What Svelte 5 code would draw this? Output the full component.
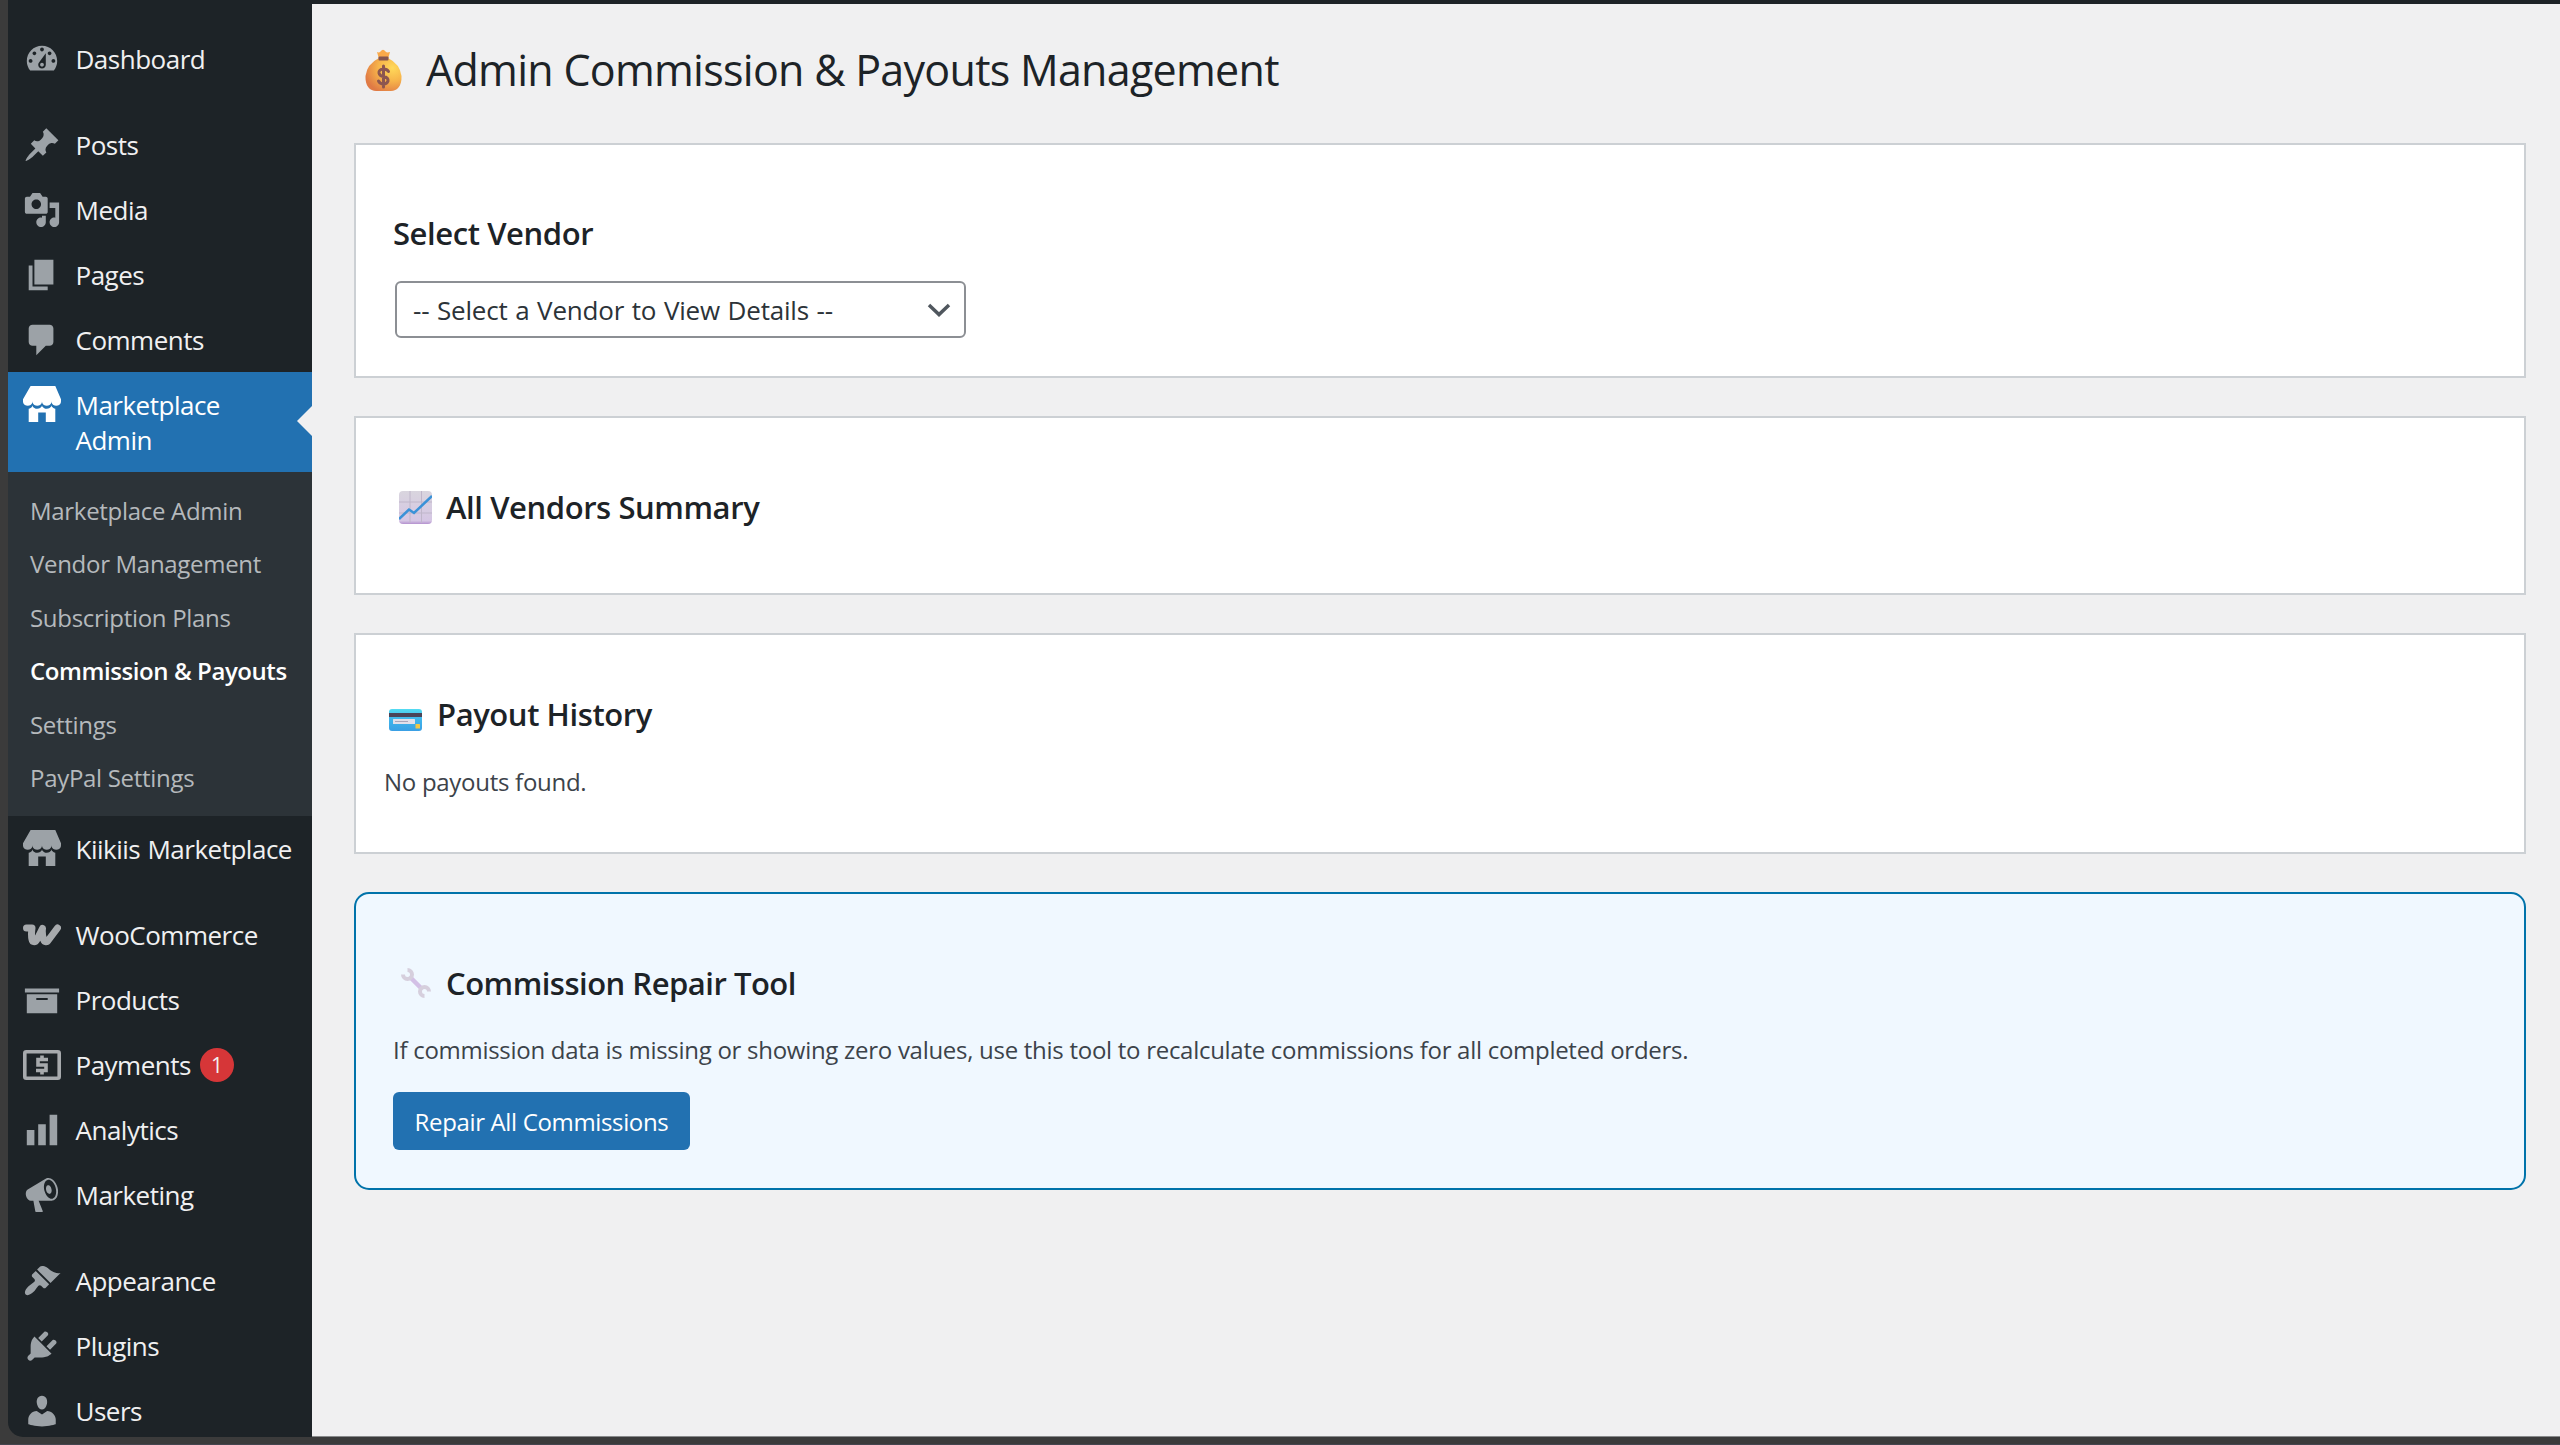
<script>
  // dashicons, 20x20
  const icons = {
    dashboard:
      "M3.76 16h12.48c1.1-1.37 1.76-3.11 1.76-5 0-4.42-3.58-8-8-8s-8 3.58-8 8c0 1.89.66 3.63 1.76 5zM10 4c.55 0 1 .45 1 1s-.45 1-1 1-1-.45-1-1 .45-1 1-1zM6 6c.55 0 1 .45 1 1s-.45 1-1 1-1-.45-1-1 .45-1 1-1zm8 0c.55 0 1 .45 1 1s-.45 1-1 1-1-.45-1-1 .45-1 1-1zm-5.37 5.55L12 7v6c0 1.1-.9 2-2 2s-2-.9-2-2c0-.57.24-1.08.63-1.45zM4 10c.55 0 1 .45 1 1s-.45 1-1 1-1-.45-1-1 .45-1 1-1zm12 0c.55 0 1 .45 1 1s-.45 1-1 1-1-.45-1-1 .45-1 1-1zm-5 3c0-.55-.45-1-1-1s-1 .45-1 1 .45 1 1 1 1-.45 1-1z",
    post:
      "M10.44 3.02l1.82-1.82 6.36 6.35-1.83 1.82c-1.05-.68-2.48-.57-3.41.36l-.75.75c-.92.93-1.04 2.35-.35 3.41l-1.83 1.82-2.41-2.41-2.8 2.79c-.42.42-3.38 2.71-3.8 2.29s1.86-3.39 2.28-3.81l2.79-2.79L4.1 9.36l1.83-1.82c1.05.69 2.48.57 3.4-.36l.75-.75c.93-.92 1.05-2.35.36-3.41z",
    media:
      "M13 11V4c0-.55-.45-1-1-1h-1.67L9 1H5L3.67 3H2c-.55 0-1 .45-1 1v7c0 .55.45 1 1 1h10c.55 0 1-.45 1-1zM7 4.5c1.38 0 2.5 1.12 2.5 2.5S8.38 9.5 7 9.5 4.5 8.38 4.5 7 5.62 4.5 7 4.5zM14 6h5v10.5c0 1.38-1.12 2.5-2.5 2.5S14 17.88 14 16.5s1.12-2.5 2.5-2.5c.17 0 .34.02.5.05V9h-3V6zm-4 8.05V13h2v3.5c0 1.38-1.12 2.5-2.5 2.5S7 17.88 7 16.5 8.12 14 9.5 14c.17 0 .34.02.5.05z",
    page: "M6 15V2h10v13H6zm-1 1h8v2H3V5h2v11z",
    comments:
      "M5 2h9c1.1 0 2 .9 2 2v7c0 1.1-.9 2-2 2h-2l-5 5v-5H5c-1.1 0-2-.9-2-2V4c0-1.1.9-2 2-2z",
    store:
      "M1 10c.41.29.96.43 1.5.43.55 0 1.09-.14 1.5-.43.62-.46 1-1.17 1-2 0 .83.37 1.54 1 2 .41.29.96.43 1.5.43.55 0 1.09-.14 1.5-.43.62-.46 1-1.17 1-2 0 .83.37 1.54 1 2 .41.29.96.43 1.51.43.54 0 1.08-.14 1.49-.43.62-.46 1-1.17 1-2 0 .83.37 1.54 1 2 .41.29.96.43 1.5.43.55 0 1.09-.14 1.5-.43.63-.46 1-1.17 1-2V7l-3-7H4L0 7v1c0 .83.37 1.54 1 2zm2 8.99h5v-5h4v5h5v-7c-.37-.05-.72-.22-1-.43-.63-.45-1-.73-1-1.56 0 .83-.38 1.11-1 1.56-.41.3-.95.43-1.49.44-.55 0-1.1-.14-1.51-.44-.63-.45-1-.73-1-1.56 0 .83-.38 1.11-1 1.56-.41.3-.95.43-1.5.44-.54 0-1.09-.14-1.5-.44-.63-.45-1-.73-1-1.57 0 .84-.38 1.12-1 1.57-.29.21-.63.38-1 .44v6.99z",
    archive: "M19 4v2H1V4h18zM2 7h16v10H2V7zm11 3V9H7v1h6z",
    chart: "M18 18V2h-4v16h4zm-6 0V7H8v11h4zm-6 0v-8H2v8h4z",
    megaphone:
      "M18.15 5.94c.46 1.62.38 3.22-.02 4.48-.42 1.28-1.26 2.18-2.3 2.48-.16.06-.26.06-.4.06-.06.02-.12.02-.18.02-.06.02-.14.02-.22.02h-6.8l2.22 5.5c.02.14-.06.26-.14.34-.08.1-.24.16-.34.16H6.95c-.1 0-.26-.06-.34-.16-.08-.08-.16-.2-.14-.34l-1-5.5H4.25l-.02-.02c-.5.06-1.08-.18-1.54-.62s-.88-1.08-1.06-1.88c-.24-.8-.2-1.56-.02-2.2.18-.62.58-1.08 1.06-1.3l.02-.02 9-5.4c.1-.06.18-.1.24-.16.06-.04.14-.08.24-.12.16-.08.28-.12.5-.18 1.04-.3 2.24.1 3.22.98s1.84 2.24 2.26 3.86zm-2.58 5.98h-.02c.4-.1.74-.34 1.04-.7.58-.7.86-1.76.86-3.04 0-.64-.1-1.3-.28-1.98-.34-1.36-1.02-2.5-1.78-3.24s-1.68-1.1-2.46-.88c-.82.22-1.4.96-1.7 2-.32 1.04-.28 2.36.06 3.72.38 1.36 1 2.5 1.8 3.24.78.74 1.62 1.1 2.48.88zm-2.54-7.08c.22-.04.42-.02.62.04.38.16.76.48 1.02 1s.42 1.2.42 1.78c0 .3-.04.56-.12.8-.18.48-.44.84-.86.94-.34.1-.8-.06-1.14-.4s-.64-.86-.78-1.5c-.18-.62-.12-1.24.02-1.72s.48-.84.82-.94z",
    appearance:
      "M14.48 11.06L7.41 3.99l1.5-1.5c.5-.56 2.3-.47 3.51.32 1.21.8 1.43 1.28 2.91 2.1 1.18.64 2.45 1.26 4.45.85zm-.71.71L6.7 4.7 4.93 6.47c-.39.39-.39 1.02 0 1.41l1.06 1.06c.39.39.39 1.03 0 1.42-.6.6-1.43 1.11-2.21 1.69-.35.26-.7.53-1.01.84C1.43 14.23.4 16.08 1.4 17.07c.99 1 2.84-.03 4.18-1.36.31-.31.58-.66.85-1.02.57-.78 1.08-1.61 1.69-2.21.39-.39 1.02-.39 1.41 0l1.06 1.06c.39.39 1.02.39 1.41 0z",
    plugins:
      "M13.11 4.36L9.87 7.6 8 5.73l3.24-3.24c.35-.34 1.05-.2 1.56.32.52.51.66 1.21.31 1.55zm-8 1.77l.91-1.12 9.01 9.01-1.19.84c-.71.71-2.63 1.16-3.82 1.16H6.14L4.9 17.26c-.59.59-1.54.59-2.12 0-.59-.58-.59-1.53 0-2.12l1.24-1.24v-3.88c0-1.13.4-3.19 1.09-3.89zm7.26 3.97l3.24-3.24c.34-.35 1.04-.21 1.55.31.52.51.66 1.21.31 1.55l-3.24 3.25z",
    users:
      "M10 9.25c-2.27 0-2.73-3.44-2.73-3.44C7 4.02 7.82 2 9.97 2c2.16 0 2.98 2.02 2.71 3.81 0 0-.41 3.44-2.68 3.44zm0 2.57L12.72 10c2.39 0 4.52 2.33 4.52 4.53v2.49s-3.65 1.13-7.24 1.13c-3.65 0-7.24-1.13-7.24-1.13v-2.49c0-2.25 1.94-4.48 4.47-4.48z"
  };

  const submenu = [
    "Marketplace Admin",
    "Vendor Management",
    "Subscription Plans",
    "Commission & Payouts",
    "Settings",
    "PayPal Settings"
  ];

  const menu = [
    { label: "Dashboard", icon: "dashboard" },
    { separator: true },
    { label: "Posts", icon: "post" },
    { label: "Media", icon: "media" },
    { label: "Pages", icon: "page" },
    { label: "Comments", icon: "comments" },
    { label: "Marketplace Admin", icon: "store", open: true },
    { label: "Kiikiis Marketplace", icon: "store" },
    { separator: true },
    { label: "WooCommerce", icon: "woo" },
    { label: "Products", icon: "archive" },
    { label: "Payments", icon: "payments", count: 1 },
    { label: "Analytics", icon: "chart" },
    { label: "Marketing", icon: "megaphone" },
    { separator: true },
    { label: "Appearance", icon: "appearance" },
    { label: "Plugins", icon: "plugins" },
    { label: "Users", icon: "users" }
  ];
</script>

<style>
  :global(body) {
    overflow: hidden;
    background: #3b3b3b;
  }

  .admin {
    display: flex;

    box-sizing: border-box;
    width: 2560px;
    height: 1445px;
    padding: 0 0 7px 8px;

    border-bottom: 1px solid #45454f;
    background: #3b3b3b;

    color: #3c434a;

    font-family: "Open Sans", "Segoe UI", sans-serif;
    font-size: 24px;
  }

  /* #### Sidebar #### */
  .sidebar {
    flex: none;
    overflow: hidden;

    box-sizing: border-box;
    width: 304px;
    padding-top: 26px;

    border-bottom-left-radius: 15px;
    background: #1d2327;
  }

  .separator {
    height: 21px;
  }

  .item {
    position: relative;

    display: flex;

    padding: 15.6px 0 14.5px;

    color: #f0f0f1;

    font-size: 26px;
    line-height: 35px;
  }

  .icon {
    display: flex;
    flex: none;
    justify-content: center;

    width: 67.5px;
    margin: -2px 0 -5px;

    color: #9ca2a7;
  }

  .icon svg {
    width: 38px;
    height: 38px;
  }

  .label {
    letter-spacing: -0.5px;
    word-spacing: 1px;
  }

  .open {
    padding-bottom: 13.9px;

    background: #2271b1;

    color: #fff;
  }

  .open .icon {
    color: #fff;
  }

  .open .label {
    width: 170px;
  }

  .open::after {
    position: absolute;
    top: 34px;
    right: 0;

    border: 15px solid transparent;
    border-left-width: 0;
    border-right-color: #f0f0f1;

    content: "";
  }

  .count {
    align-self: center;

    width: 34px;
    height: 34px;
    margin-left: 9px;

    border-radius: 50%;
    background: #d63638;

    text-align: center;

    font-size: 21px;
    line-height: 34px;
  }

  .submenu {
    display: flex;
    flex-direction: column;

    padding: 12px 0 11.6px 22px;

    background: #2c3338;
  }

  .submenu a {
    letter-spacing: -0.3px;

    color: #b5b9bc;

    line-height: 53.4px;
  }

  .submenu .current {
    letter-spacing: -0.42px;

    color: #fff;

    font-weight: 600;
  }

  /* #### Content #### */
  .content {
    flex: 1;

    padding: 0 34px 0 42px;

    border-top: 4px solid #1d2327;
    border-bottom: 1px solid #888a8b;
    background: #f0f0f1;
  }

  h1,
  h2,
  p {
    margin: 0;
  }

  h1 {
    display: flex;
    align-items: center;
    gap: 24px;

    padding: 36px 0 43px 11px;

    letter-spacing: -0.72px;

    color: #1d2327;

    font-size: 43px;
    font-weight: 400;
    line-height: 60px;
  }

  h2 {
    letter-spacing: -0.42px;

    color: #1d2327;

    font-size: 31px;
    font-weight: 600;
    line-height: 42px;
  }

  p {
    letter-spacing: -0.28px;

    line-height: 36px;
  }

  .heading {
    display: flex;
    align-items: center;
    gap: 15px;
  }

  .panel {
    box-sizing: border-box;
    margin-bottom: 38px;

    border: 2px solid #ccd0d4;
    background: #fff;
  }

  .vendor {
    height: 235px;
    padding: 67px 37px 0;
  }

  .summary {
    height: 179px;
    padding: 68px 43px 0;
  }

  .summary .heading {
    gap: 14px;
  }

  .history {
    height: 221px;
    padding: 58px 28px 0;
  }

  .history .heading {
    margin-bottom: 29px;
    padding-left: 5px;
  }

  .history svg {
    margin-top: 12px;
  }

  .repair {
    height: 298px;
    padding: 68px 37px 0;

    border-color: #0073aa;
    border-radius: 15px;
    background: #f0f8ff;
  }

  .repair .heading {
    margin-bottom: 28px;
    padding-left: 8px;
  }

  .repair h2 {
    letter-spacing: -0.5px;
  }

  .select {
    display: flex;
    align-items: center;
    justify-content: space-between;

    box-sizing: border-box;
    width: 571px;
    height: 57px;
    margin: 27px 0 0 2px;
    padding: 0 13px 0 16px;

    border: 2px solid #8c8f94;
    border-radius: 6px;

    letter-spacing: -0.2px;
    word-spacing: 1.1px;

    color: #2c3338;

    font-size: 26px;
  }

  button {
    width: 297px;
    height: 58px;
    margin-top: 24px;
    padding: 0;

    border: none;
    border-radius: 6px;
    background: #2271b1;

    letter-spacing: -0.35px;

    color: #fff;

    font-family: inherit;
    font-size: 24px;
  }
</style>

<div class="admin">
  <nav class="sidebar">
    {#each menu as item}
      {#if item.separator}
        <div class="separator"></div>
      {:else}
        <div class="item" class:open={item.open}>
          <div class="icon">
            {#if item.icon === "woo"}
              <svg viewBox="0 0 38 38" fill="none" stroke="#a7aaad" stroke-width="7" stroke-linecap="round" stroke-linejoin="round">
                <path d="M3.500 12H9C8.500 16 8 19 9 23.500C9.500 26.500 12.500 26.500 14 23.500L19.500 12.500C19 16 19.500 20 20.500 23.500C21.500 26.500 24 26.500 25.500 24L34.500 12" />
              </svg>
            {:else if item.icon === "payments"}
              <svg viewBox="0 0 38 38" fill="none" stroke="#a7aaad" stroke-width="3.600">
                <rect x="1.800" y="5.800" width="34.400" height="26.400" rx="1.500" />
                <path d="M25 13.500H15V19H23V24.500H13M19 9.500V13.500M19 24.500V28.500" />
              </svg>
            {:else}
              <svg viewBox="0 0 20 20" fill="currentColor">
                <path d={icons[item.icon]} />
              </svg>
            {/if}
          </div>
          <div class="label">{item.label}</div>
          {#if item.count}
            <span class="count">{item.count}</span>
          {/if}
        </div>
        {#if item.open}
          <div class="submenu">
            {#each submenu as entry}
              <!-- svelte-ignore a11y_missing_attribute -->
              <a class:current={entry === "Commission & Payouts"}>{entry}</a>
            {/each}
          </div>
        {/if}
      {/if}
    {/each}
  </nav>

  <main class="content">
    <h1>
      <svg width="37" height="44" viewBox="0 0 37 44">
        <defs>
          <radialGradient id="gold" cx="0.75" cy="0.3" r="0.8">
            <stop offset="0" stop-color="#ffd95a" />
            <stop offset="0.5" stop-color="#f7b44a" />
            <stop offset="1" stop-color="#e07a45" />
          </radialGradient>
        </defs>
        <path d="M14 11L12 4Q14 5 15.500 3.500Q18 0 20.500 3.500Q22 5 25 4L23 11Z" fill="#f9a94b" />
        <path d="M14 10Q2 16 .5 28C0 38 5 43 11 43H26C32 43 37 38 36.500 28Q35 16 23 10Z" fill="url(#gold)" />
        <rect x="13.500" y="8.500" width="10" height="4" rx="1" fill="#85554f" />
        <path d="M23.500 23.500Q22 21 18.500 21Q13.500 21.500 14 25Q14.500 28 18.500 28.500Q23.500 29.500 23 33Q22 36 18.500 36Q15 36 13.500 33M18.500 18V39" fill="none" stroke="#8c5650" stroke-width="3" stroke-linecap="round" />
      </svg>
      <span>Admin Commission &amp; Payouts Management</span>
    </h1>

    <section class="panel vendor">
      <h2>Select Vendor</h2>
      <div class="select">
        <span>-- Select a Vendor to View Details --</span>
        <svg width="24" height="24" viewBox="0 0 24 24" fill="none" stroke="#50575e" stroke-width="3.500">
          <path d="M2 7L12 16.500L22 7" />
        </svg>
      </div>
    </section>

    <section class="panel summary">
      <div class="heading">
        <svg width="33" height="33" viewBox="0 0 33 33">
          <defs>
            <linearGradient id="sheet" x2="0" y2="1">
              <stop offset="0" stop-color="#d9d5de" />
              <stop offset="0.9" stop-color="#d5c6e4" />
              <stop offset="1" stop-color="#b491cf" />
            </linearGradient>
          </defs>
          <rect width="33" height="33" rx="4" fill="url(#sheet)" />
          <path d="M11 0V32M22.500 0V32M0 11H33M0 22H33" stroke="#bfb6ca" />
          <path d="M0 28L10 18.500L15 22L33 5" fill="none" stroke="#3a92d8" stroke-width="2.500" />
        </svg>
        <h2>All Vendors Summary</h2>
      </div>
    </section>

    <section class="panel history">
      <div class="heading">
        <svg width="33" height="22" viewBox="0 0 33 22">
          <defs>
            <linearGradient id="card" x2="0" y2="1">
              <stop offset="0" stop-color="#54dcf2" />
              <stop offset="0.4" stop-color="#41b9ec" />
              <stop offset="1" stop-color="#3a9fe4" />
            </linearGradient>
          </defs>
          <rect width="33" height="22" rx="3" fill="url(#card)" />
          <rect y="4" width="33" height="4" fill="#4a4458" />
          <rect x="4" y="10" width="22" height="5" rx="0.500" fill="#e2e0ea" />
          <path d="M6 12.500H19" stroke="#aaa5b8" />
          <rect x="26.500" y="15" width="4.500" height="4.500" rx="0.500" fill="#f3c747" />
        </svg>
        <h2>Payout History</h2>
      </div>
      <p>No payouts found.</p>
    </section>

    <section class="panel repair">
      <div class="heading">
        <svg width="30" height="30" viewBox="0 0 30 30" fill="none">
          <path d="M8.500 8.500L21.500 21.500" stroke="#d3c0e6" stroke-width="4.500" />
          <path d="M6.500 2A4.500 4.500 0 1 1 2 6.500" stroke="#d6cfdd" stroke-width="4" />
          <path d="M23.500 28A4.500 4.500 0 1 1 28 23.500" stroke="#d6cfdd" stroke-width="4" />
        </svg>
        <h2>Commission Repair Tool</h2>
      </div>
      <p>
        If commission data is missing or showing zero values, use this tool to recalculate commissions for all completed orders.
      </p>
      <button>Repair All Commissions</button>
    </section>
  </main>
</div>
